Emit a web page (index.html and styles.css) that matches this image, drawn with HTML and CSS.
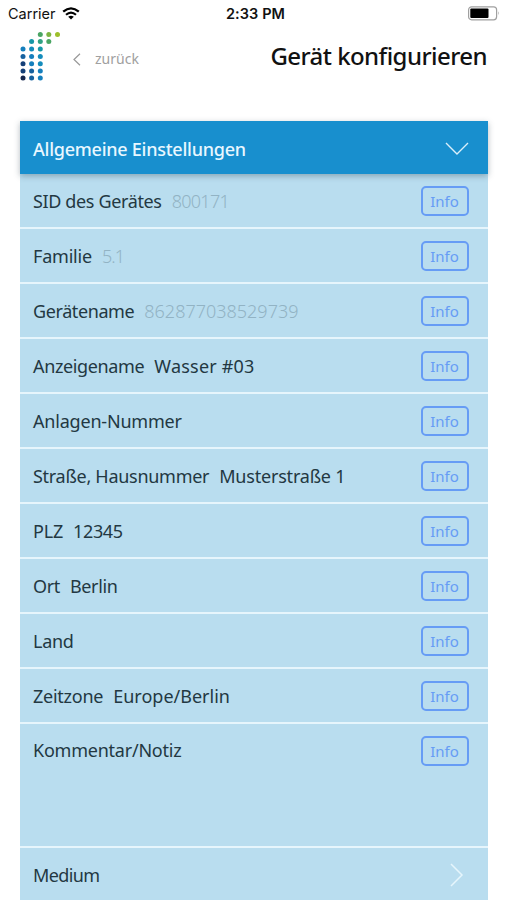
FILE: index.html
```html
<!DOCTYPE html>
<html lang="de">
<head>
  <meta charset="UTF-8">
  <meta name="viewport" content="width=device-width, initial-scale=1.0">
  <title>Gerät konfigurieren</title>
  <link rel="stylesheet" href="styles.css">
</head>
<body>
  <div class="status-bar">
    <div class="carrier">
      <span>Carrier</span>
      <svg class="wifi" width="18" height="13" viewBox="0 0 18 13" fill="none" stroke="#000">
        <path d="M1.2 4.7Q9 -2 16.8 4.7" stroke-width="2.3"/>
        <path d="M4 7.8Q9 3.3 14 7.8" stroke-width="2.1"/>
        <path d="M6.2 9.7Q9 7.6 11.8 9.7L9 12.6Z" fill="#000" stroke="none"/>
      </svg>
    </div>
    <div class="time">2:33 PM</div>
    <svg class="battery" width="32" height="15" viewBox="0 0 32 15">
      <rect x="0.6" y="0.8" width="28" height="13" rx="3" fill="#fff" stroke="#a0a0a0" stroke-width="1.2"/>
      <rect x="2.3" y="2.6" width="18.2" height="9.4" rx="1" fill="#000"/>
      <path d="M30 5.3Q31.6 7.3 30 9.3Z" fill="#a0a0a0"/>
    </svg>
  </div>
  <header class="header">
    <svg class="logo" width="42" height="50" viewBox="0 0 42 50">
      <g fill="#4aa564"><circle cx="20.3" cy="3.4" r="2.5"/><circle cx="28.8" cy="10.6" r="2.5"/></g>
      <circle cx="28.8" cy="3.4" r="2.5" fill="#7cb342"/>
      <circle cx="37.5" cy="3.4" r="2.5" fill="#9dbf2b"/>
      <circle cx="20.3" cy="10.6" r="2.5" fill="#2fa183"/>
      <g fill="#1697a8"><circle cx="11.6" cy="10.6" r="2.5"/><circle cx="20.3" cy="18" r="2.5"/></g>
      <g fill="#148cbc"><circle cx="11.6" cy="18" r="2.5"/><circle cx="20.3" cy="25.4" r="2.5"/><circle cx="20.3" cy="32.7" r="2.5"/></g>
      <g fill="#157fbd"><circle cx="3" cy="18" r="2.5"/><circle cx="11.6" cy="25.4" r="2.5"/><circle cx="11.6" cy="32.7" r="2.5"/><circle cx="20.3" cy="40" r="2.5"/><circle cx="20.3" cy="47.1" r="2.5"/></g>
      <g fill="#16619f"><circle cx="3" cy="25.4" r="2.5"/><circle cx="11.6" cy="40" r="2.5"/><circle cx="11.6" cy="47.1" r="2.5"/></g>
      <g fill="#154078"><circle cx="3" cy="32.7" r="2.5"/><circle cx="3" cy="40" r="2.5"/></g>
      <circle cx="3" cy="47.1" r="2.5" fill="#14264d"/>
    </svg>
    <a class="back">
      <svg width="8" height="13" viewBox="0 0 8 13" fill="none" stroke="#999" stroke-width="1.2"><path d="M7 0.7L1 6.5L7 12.3"/></svg>
      <span>zurück</span>
    </a>
    <h1>Gerät konfigurieren</h1>
  </header>

  <main class="settings">
    <div class="section-head">
      <span>Allgemeine Einstellungen</span>
      <svg width="24" height="13" viewBox="0 0 24 13" fill="none" stroke="#d9effa" stroke-width="1.4"><path d="M1 1L12 12L23 1"/></svg>
    </div>
    <div class="row"><span class="label sid">SID des Gerätes</span><span class="value readonly sid">800171</span><button class="info">Info</button></div>
    <div class="row"><span class="label family">Familie</span><span class="value readonly family">5.1</span><button class="info">Info</button></div>
    <div class="row"><span class="label device">Gerätename</span><span class="value readonly device">862877038529739</span><button class="info">Info</button></div>
    <div class="row"><span class="label display">Anzeigename</span><span class="value display">Wasser #03</span><button class="info">Info</button></div>
    <div class="row"><span class="label plant">Anlagen-Nummer</span><button class="info">Info</button></div>
    <div class="row"><span class="label street">Straße, Hausnummer</span><span class="value street">Musterstraße 1</span><button class="info">Info</button></div>
    <div class="row"><span class="label zip">PLZ</span><span class="value zip">12345</span><button class="info">Info</button></div>
    <div class="row"><span class="label city">Ort</span><span class="value city">Berlin</span><button class="info">Info</button></div>
    <div class="row"><span class="label country">Land</span><button class="info">Info</button></div>
    <div class="row"><span class="label timezone">Zeitzone</span><span class="value timezone">Europe/Berlin</span><button class="info">Info</button></div>
    <div class="row note"><span class="label comment">Kommentar/Notiz</span><button class="info">Info</button></div>
    <div class="row">
      <span class="label medium">Medium</span>
      <svg class="next" width="14" height="24" viewBox="0 0 14 24" fill="none" stroke="#e6f5fc" stroke-width="1.5"><path d="M1 1L12 12L1 23"/></svg>
    </div>
  </main>
</body>
</html>
```
FILE: styles.css
```css
* {
  box-sizing: border-box;
}
body {
  margin: 0;
  height: 900px;
  overflow: hidden;
  background-color: #fff;
  color: #233842;
  font-family: "Noto Sans", sans-serif;
}
.status-bar {
  display: grid;
  grid-template-columns: 1fr auto 1fr;
  align-items: center;
  height: 27px;
  padding: 0 7px 0 8px;
  color: #111;
  font-family: Inter, sans-serif;
  font-size: 14.5px;
}
.carrier {
  display: flex;
  align-items: center;
  gap: 6px;
}
.time {
  padding-left: 3px;
  font-weight: 600;
  letter-spacing: 0.1px;
}
.battery {
  justify-self: end;
}
.header {
  display: flex;
  height: 94px;
  padding: 4px 20px 0;
}
.back {
  display: flex;
  align-items: center;
  gap: 14px;
  height: 57px;
  margin-left: 11px;
  color: #a0a0a0;
  font-size: 14px;
}
.back span {
  padding-bottom: 2px;
}
h1 {
  margin: 0 0 0 auto;
  color: #111;
  font-size: 24px;
  font-weight: 500;
  letter-spacing: -0.55px;
  line-height: 50px;
  white-space: nowrap;
}
.settings {
  width: 467.5px;
  margin-left: 20px;
}
.section-head {
  position: relative;
  display: flex;
  align-items: center;
  justify-content: space-between;
  height: 53px;
  padding: 2px 19px 0 13px;
  background-color: #188fce;
  box-shadow: 0 2px 6px rgba(40, 60, 75, 0.35);
  color: #e8f7ff;
  font-size: 18px;
  font-weight: 500;
  letter-spacing: -0.25px;
}
.row {
  display: flex;
  align-items: center;
  height: 55px;
  padding: 0 19px 0 13px;
  background-color: #b9ddef;
  border-bottom: 2px solid #e6f5fc;
  font-size: 18px;
  white-space: nowrap;
}
.value {
  margin-left: 10px;
}
.readonly {
  color: #92b3c4;
  font-weight: 300;
}
.info {
  width: 48px;
  height: 30px;
  margin-left: auto;
  padding: 0;
  background: none;
  border: 2px solid #669cf5;
  border-radius: 5px;
  color: #669cf5;
  font-family: "Noto Sans", sans-serif;
  font-size: 15px;
}
.note {
  align-items: flex-start;
  height: 124px;
  padding-top: 12px;
}
.note .label {
  padding-top: 2px;
}
.next {
  margin: 0 5px 0 auto;
}

/* tracking per field */
.label.sid { letter-spacing: -0.36px; }
.value.sid { letter-spacing: -0.7px; }
.label.family { letter-spacing: -0.2px; }
.value.family { letter-spacing: -1px; }
.label.device { letter-spacing: -0.4px; }
.label.display { letter-spacing: -0.36px; }
.value.display { letter-spacing: 0.2px; }
.plant { letter-spacing: -0.2px; }
.label.street { letter-spacing: -0.28px; }
.value.street { letter-spacing: -0.2px; }
.label.zip { letter-spacing: -0.2px; }
.value.zip { letter-spacing: -0.35px; }
.city { letter-spacing: -0.35px; }
.country { letter-spacing: -0.3px; }
.label.timezone { letter-spacing: -0.25px; }
.comment { letter-spacing: -0.23px; }
.medium { letter-spacing: -0.6px; }
```
